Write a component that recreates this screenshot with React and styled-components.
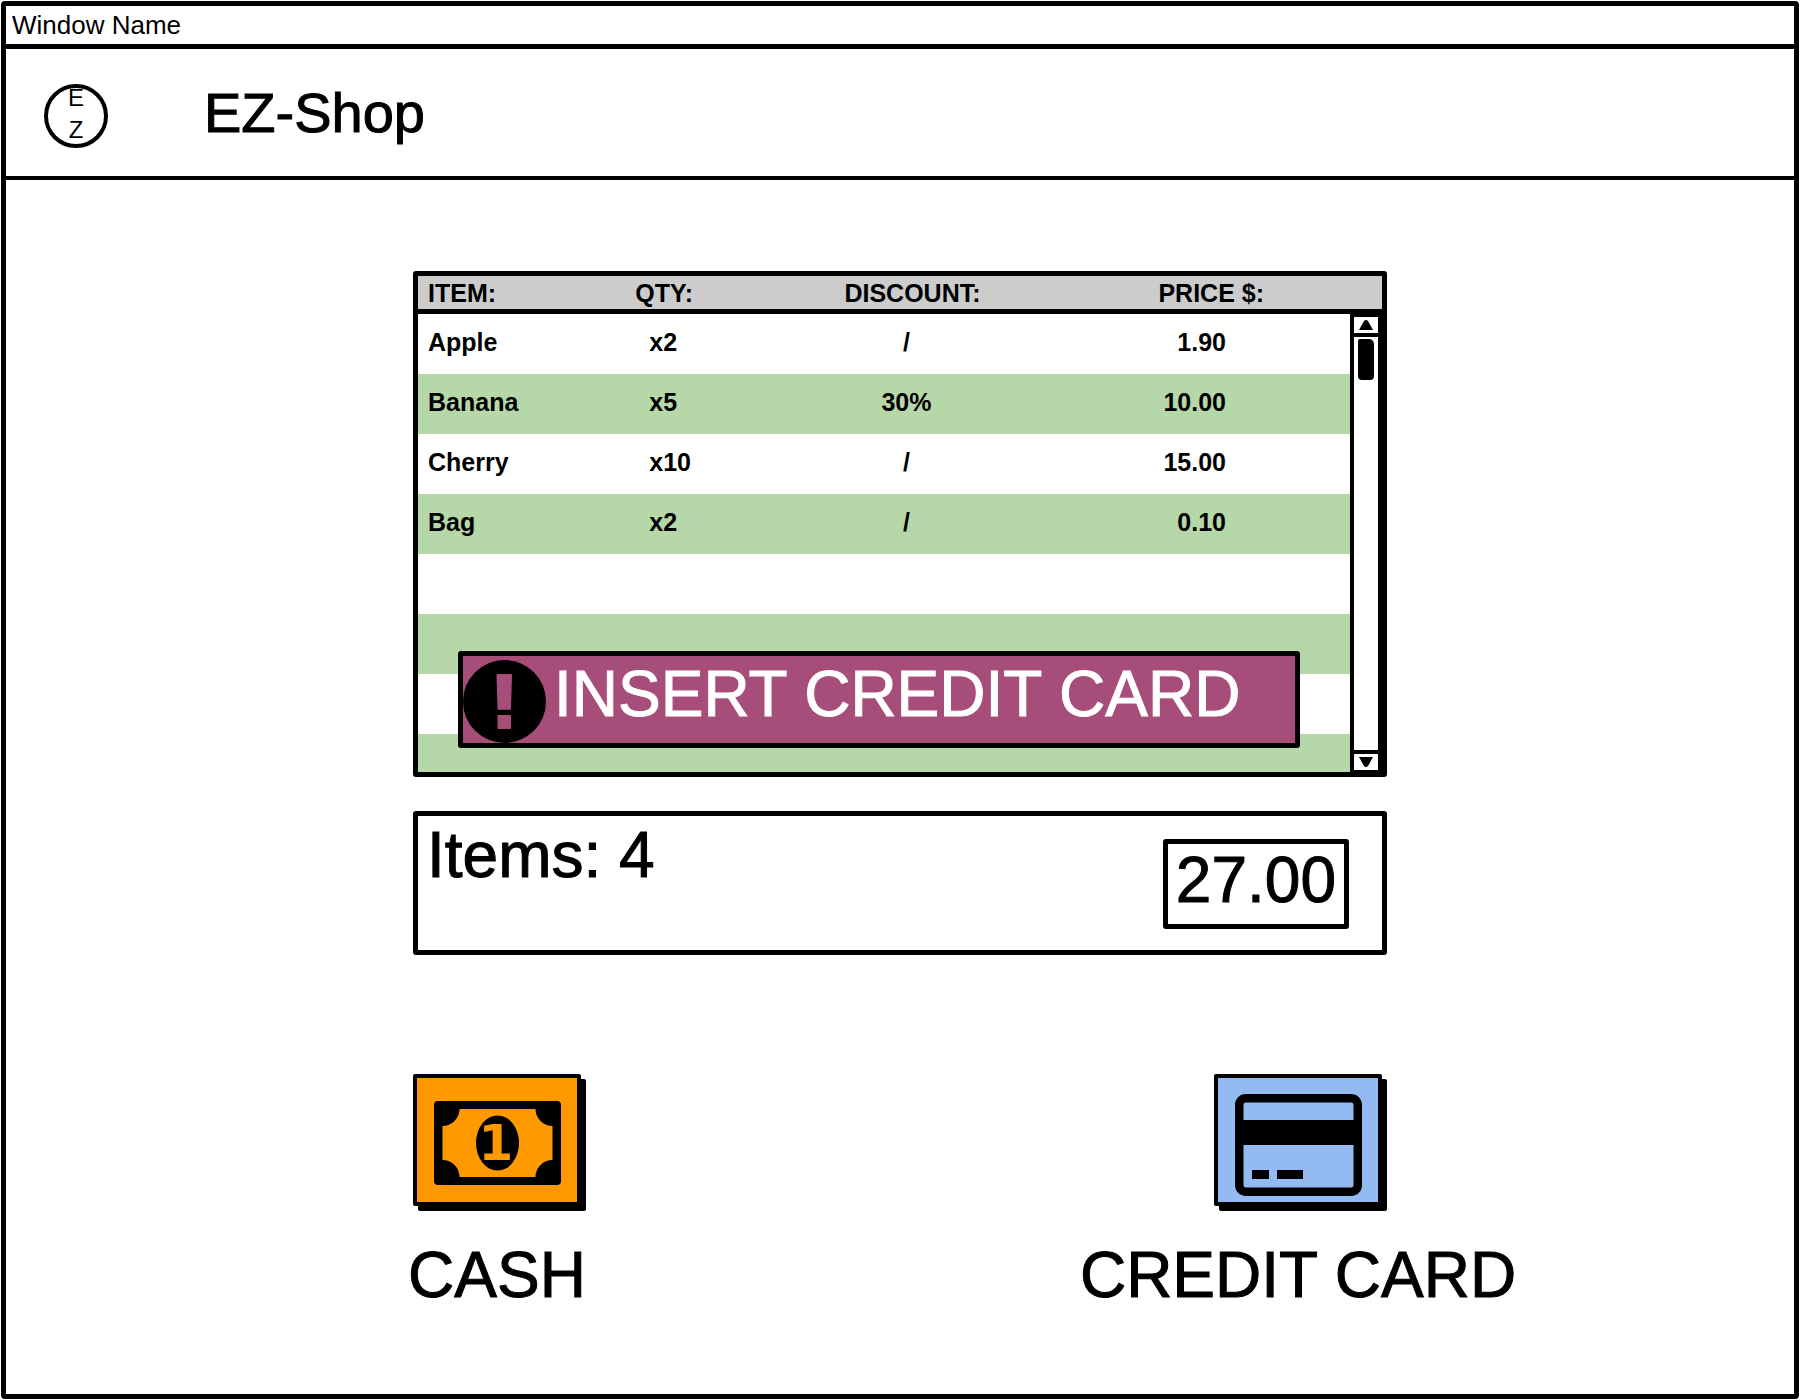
import React from 'react';
import styled, { createGlobalStyle } from 'styled-components';

const GlobalStyle = createGlobalStyle`
  *, *::before, *::after { box-sizing: border-box; }
  body {
    margin: 1px;
    background: #fff;
    color: #000;
    font-family: "Liberation Sans", Arial, sans-serif;
  }
`;

const Window = styled.div`
  display: flex;
  flex-direction: column;
  min-height: calc(100vh - 2px);
  border: 5px solid #000;
  border-radius: 4px;
`;

const TitleBar = styled.div`
  padding: 0 6px;
  border-bottom: 5px solid #000;
  font-size: 26px;
  line-height: 38px;
`;

const Header = styled.header`
  display: flex;
  align-items: flex-start;
  gap: 96px;
  padding: 35px 38px 28px;
  border-bottom: 4px solid #000;
`;

const Logo = styled.div`
  display: flex;
  flex-direction: column;
  align-items: center;
  justify-content: center;
  width: 64px;
  height: 64px;
  padding-bottom: 4px;
  border: 4px solid #000;
  border-radius: 50%;
  font-size: 24px;
  line-height: 32px;
`;

const ShopName = styled.h1`
  margin: 0;
  font-size: 56px;
  font-weight: 400;
  line-height: 58px;
  -webkit-text-stroke: 1px currentColor;
`;

const Main = styled.main`
  width: 100%;
  max-width: 974px;
  margin: 0 auto;
  padding: 91px 0 60px;
`;

const CartPanel = styled.section`
  position: relative;
  height: 506px;
  overflow: hidden;
  border: 5px solid #000;
  border-radius: 3px;
`;

const CartTable = styled.table`
  width: 100%;
  table-layout: fixed;
  border-spacing: 0;
  font-size: 25px;
  font-weight: 700;
  line-height: 32px;
`;

const Column = styled.col`
  width: ${({ $width }) => $width};
`;

const HeadCell = styled.th`
  height: 38px;
  padding: 0 ${({ $end }) => $end || '0'} 0 10px;
  border-bottom: 5px solid #000;
  background: #ccc;
  text-align: ${({ $align }) => $align || 'left'};
  white-space: nowrap;
`;

const Row = styled.tr`
  background: #fff;
  &:nth-child(even) { background: #b6d7a8; }
`;

const Cell = styled.td`
  height: 60px;
  padding: 0 ${({ $end }) => $end || '0'} 4px ${({ $start }) => $start || '0'};
  text-align: ${({ $align }) => $align || 'left'};
`;

const Scrollbar = styled.div`
  position: absolute;
  top: 37px;
  right: 0;
  bottom: 0;
  display: flex;
  flex-direction: column;
  justify-content: space-between;
  width: 32px;
  border-left: 4px solid #000;
  border-right: 4px solid #000;
  background: #fff;
`;

const ScrollButton = styled.button`
  display: flex;
  align-items: center;
  justify-content: center;
  width: 100%;
  height: ${({ $last }) => ($last ? '22px' : '24px')};
  padding: 0;
  border: 0 solid #000;
  border-width: 4px 0 ${({ $last }) => ($last ? '2px' : '4px')};
  background: #fff;
`;

const Track = styled.div`
  display: flex;
  flex: 1;
  justify-content: center;
  padding-top: 2px;
`;

const Thumb = styled.div`
  width: 16px;
  height: 41px;
  border-radius: 2px 5px 4px 4px;
  background: #000;
`;

const Alert = styled.div`
  position: absolute;
  left: 40px;
  right: 82px;
  bottom: 24px;
  display: flex;
  align-items: flex-start;
  gap: 8px;
  height: 97px;
  padding: 4px 0 0;
  border: 5px solid #000;
  border-radius: 3px;
  background: #a64d79;
  color: #fff;
  font-size: 64px;
  line-height: 68px;
  white-space: nowrap;
  -webkit-text-stroke: 1px currentColor;
`;

const Summary = styled.section`
  display: flex;
  align-items: flex-start;
  justify-content: space-between;
  height: 144px;
  margin-top: 34px;
  padding: 5px 33px 0 9px;
  border: 5px solid #000;
  border-radius: 3px;
  font-size: 64px;
  line-height: 68px;
  -webkit-text-stroke: 1px currentColor;
`;

const Total = styled.output`
  height: 90px;
  margin-top: 18px;
  padding: 2px 8px 0;
  border: 5px solid #000;
  border-radius: 3px;
`;

const Payments = styled.section`
  display: flex;
  justify-content: space-between;
  margin-top: 119px;
  padding-right: 5px;
`;

const Payment = styled.div`
  display: flex;
  flex-direction: column;
  align-items: center;
  gap: 35px;
  width: 168px;
`;

const PayButton = styled.button`
  display: flex;
  align-items: center;
  justify-content: center;
  width: 100%;
  height: 132px;
  padding: 10px 0 0;
  border: 4px solid #000;
  border-radius: 2px;
  background: ${({ $color }) => $color};
  box-shadow: 5px 5px 0 #000;
  cursor: pointer;
`;

const PayLabel = styled.label`
  font-size: 64px;
  line-height: 68px;
  white-space: nowrap;
  -webkit-text-stroke: 1px currentColor;
`;

const Arrow = ({ down }) => (
  <svg width="16" height="12" viewBox="0 0 16 12" aria-hidden="true">
    <path d={down ? 'M1 1H15L10 10Q8 12 6 10Z' : 'M1 11H15L10 2Q8 0 6 2Z'} />
  </svg>
);

const AlertIcon = () => (
  <svg width="83" height="83" viewBox="0 0 83 83" aria-hidden="true">
    <circle cx="41.5" cy="41.5" r="41.5" />
    <path
      fill="#a64d79"
      d="M34.5 14H48q1 0 1 1L48 48.700q0 1-1 1H35.500q-1 0-1-1L33.500 15q0-1 1-1ZM35.500 55H47q1 0 1 1V68q0 1-1 1H35.500q-1 0-1-1V56q0-1 1-1Z"
    />
  </svg>
);

const NoteIcon = () => (
  <svg width="127" height="102" viewBox="0 0 127 102" aria-hidden="true">
    <rect y="7" width="127" height="84" rx="4" />
    <path
      fill="#ff9900"
      d="M25.500 15H101.500A17 17 0 0 0 118.500 32V66A17 17 0 0 0 101.500 83H25.500A17 17 0 0 0 8.500 66V32A17 17 0 0 0 25.500 15Z"
    />
    <ellipse cx="63.500" cy="49" rx="21.500" ry="27.500" />
    <text
      x="62"
      y="66"
      fill="#ff9900"
      fontFamily="'DejaVu Sans', sans-serif"
      fontSize="50"
      fontWeight="700"
      textAnchor="middle"
    >
      1
    </text>
  </svg>
);

const CardIcon = () => (
  <svg width="127" height="102" viewBox="0 0 127 102" aria-hidden="true">
    <rect x="4.250" y="4.250" width="118.500" height="93.500" rx="6.500" fill="none" stroke="#000" strokeWidth="8.500" />
    <rect x="4" y="26" width="119" height="25" />
    <rect x="17" y="76" width="17" height="9" />
    <rect x="42" y="76" width="26" height="9" />
  </svg>
);

const items = [
  { name: 'Apple', qty: 'x2', discount: '/', price: '1.90' },
  { name: 'Banana', qty: 'x5', discount: '30%', price: '10.00' },
  { name: 'Cherry', qty: 'x10', discount: '/', price: '15.00' },
  { name: 'Bag', qty: 'x2', discount: '/', price: '0.10' },
];

const VISIBLE_ROWS = 8;
const rows = [...items, ...Array(VISIBLE_ROWS - items.length).fill({})];

const methods = [
  { id: 'cash', label: 'CASH', color: '#ff9900', Icon: NoteIcon },
  { id: 'card', label: 'CREDIT CARD', color: '#94baf2', Icon: CardIcon },
];

export default function App() {
  return (
    <>
      <GlobalStyle />
      <Window>
        <TitleBar>Window Name</TitleBar>
        <Header>
          <Logo>
            <span>E</span>
            <span>Z</span>
          </Logo>
          <ShopName>EZ-Shop</ShopName>
        </Header>
        <Main>
          <CartPanel>
            <CartTable>
              <colgroup>
                <Column $width="21.5%" />
                <Column $width="21.7%" />
                <Column $width="16.4%" />
                <Column $width="40.4%" />
              </colgroup>
              <thead>
                <tr>
                  <HeadCell>ITEM:</HeadCell>
                  <HeadCell>QTY:</HeadCell>
                  <HeadCell>DISCOUNT:</HeadCell>
                  <HeadCell $align="right" $end="118px">PRICE $:</HeadCell>
                </tr>
              </thead>
              <tbody>
                {rows.map((item, i) => (
                  <Row key={i}>
                    <Cell $start="10px">{item.name}</Cell>
                    <Cell $start="24px">{item.qty}</Cell>
                    <Cell $align="center" $end="14px">{item.discount}</Cell>
                    <Cell $align="right" $end="156px">{item.price}</Cell>
                  </Row>
                ))}
              </tbody>
            </CartTable>
            <Scrollbar>
              <ScrollButton type="button" aria-label="Scroll up"><Arrow /></ScrollButton>
              <Track><Thumb /></Track>
              <ScrollButton type="button" aria-label="Scroll down" $last><Arrow down /></ScrollButton>
            </Scrollbar>
            <Alert role="alert">
              <AlertIcon />
              <span>INSERT CREDIT CARD</span>
            </Alert>
          </CartPanel>
          <Summary>
            <span>Items: {items.length}</span>
            <Total>27.00</Total>
          </Summary>
          <Payments>
            {methods.map(({ id, label, color, Icon }) => (
              <Payment key={id}>
                <PayButton type="button" id={id} $color={color}><Icon /></PayButton>
                <PayLabel htmlFor={id}>{label}</PayLabel>
              </Payment>
            ))}
          </Payments>
        </Main>
      </Window>
    </>
  );
}
